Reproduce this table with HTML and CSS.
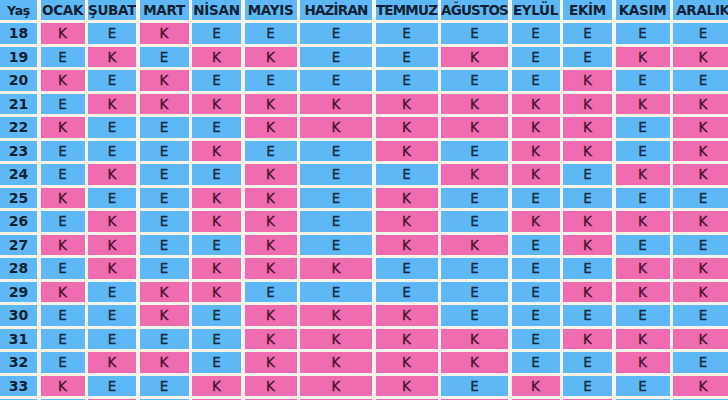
FILE: index.html
```html
<!DOCTYPE html>
<html lang="tr">
<head>
<meta charset="utf-8">
<title>Cinsiyet Tablosu</title>
<link rel="stylesheet" href="styles.css">
</head>
<body>
<div class="chart">
  <div class="h yas">Yaş</div><div class="h">OCAK</div><div class="h">ŞUBAT</div><div class="h">MART</div><div class="h">NİSAN</div><div class="h">MAYIS</div><div class="h nar">HAZİRAN</div><div class="h nar">TEMMUZ</div><div class="h nar">AĞUSTOS</div><div class="h">EYLÜL</div><div class="h">EKİM</div><div class="h">KASIM</div><div class="h">ARALIK</div>

  <div class="a">18</div><div class="k">K</div><div class="e">E</div><div class="k">K</div><div class="e">E</div><div class="e">E</div><div class="e">E</div><div class="e">E</div><div class="e">E</div><div class="e">E</div><div class="e">E</div><div class="e">E</div><div class="e">E</div>
  <div class="a">19</div><div class="e">E</div><div class="k">K</div><div class="e">E</div><div class="k">K</div><div class="k">K</div><div class="e">E</div><div class="e">E</div><div class="k">K</div><div class="e">E</div><div class="e">E</div><div class="k">K</div><div class="k">K</div>
  <div class="a">20</div><div class="k">K</div><div class="e">E</div><div class="k">K</div><div class="e">E</div><div class="e">E</div><div class="e">E</div><div class="e">E</div><div class="e">E</div><div class="e">E</div><div class="k">K</div><div class="e">E</div><div class="e">E</div>
  <div class="a">21</div><div class="e">E</div><div class="k">K</div><div class="k">K</div><div class="k">K</div><div class="k">K</div><div class="k">K</div><div class="k">K</div><div class="k">K</div><div class="k">K</div><div class="k">K</div><div class="k">K</div><div class="k">K</div>
  <div class="a">22</div><div class="k">K</div><div class="e">E</div><div class="e">E</div><div class="e">E</div><div class="k">K</div><div class="k">K</div><div class="k">K</div><div class="k">K</div><div class="k">K</div><div class="k">K</div><div class="e">E</div><div class="k">K</div>
  <div class="a">23</div><div class="e">E</div><div class="e">E</div><div class="e">E</div><div class="k">K</div><div class="e">E</div><div class="e">E</div><div class="k">K</div><div class="e">E</div><div class="k">K</div><div class="k">K</div><div class="e">E</div><div class="k">K</div>
  <div class="a">24</div><div class="e">E</div><div class="k">K</div><div class="e">E</div><div class="e">E</div><div class="k">K</div><div class="e">E</div><div class="e">E</div><div class="k">K</div><div class="k">K</div><div class="e">E</div><div class="k">K</div><div class="k">K</div>
  <div class="a">25</div><div class="k">K</div><div class="e">E</div><div class="e">E</div><div class="k">K</div><div class="k">K</div><div class="e">E</div><div class="k">K</div><div class="e">E</div><div class="e">E</div><div class="e">E</div><div class="e">E</div><div class="e">E</div>
  <div class="a">26</div><div class="e">E</div><div class="k">K</div><div class="e">E</div><div class="k">K</div><div class="k">K</div><div class="e">E</div><div class="k">K</div><div class="e">E</div><div class="k">K</div><div class="k">K</div><div class="k">K</div><div class="k">K</div>
  <div class="a">27</div><div class="k">K</div><div class="k">K</div><div class="e">E</div><div class="e">E</div><div class="k">K</div><div class="e">E</div><div class="k">K</div><div class="k">K</div><div class="e">E</div><div class="k">K</div><div class="e">E</div><div class="e">E</div>
  <div class="a">28</div><div class="e">E</div><div class="k">K</div><div class="e">E</div><div class="k">K</div><div class="k">K</div><div class="k">K</div><div class="e">E</div><div class="e">E</div><div class="e">E</div><div class="e">E</div><div class="k">K</div><div class="k">K</div>
  <div class="a">29</div><div class="k">K</div><div class="e">E</div><div class="k">K</div><div class="k">K</div><div class="e">E</div><div class="e">E</div><div class="e">E</div><div class="e">E</div><div class="e">E</div><div class="k">K</div><div class="k">K</div><div class="k">K</div>
  <div class="a">30</div><div class="e">E</div><div class="e">E</div><div class="k">K</div><div class="e">E</div><div class="k">K</div><div class="k">K</div><div class="k">K</div><div class="e">E</div><div class="e">E</div><div class="e">E</div><div class="e">E</div><div class="e">E</div>
  <div class="a">31</div><div class="e">E</div><div class="e">E</div><div class="e">E</div><div class="e">E</div><div class="k">K</div><div class="k">K</div><div class="k">K</div><div class="k">K</div><div class="e">E</div><div class="k">K</div><div class="k">K</div><div class="k">K</div>
  <div class="a">32</div><div class="e">E</div><div class="k">K</div><div class="k">K</div><div class="e">E</div><div class="k">K</div><div class="k">K</div><div class="k">K</div><div class="k">K</div><div class="e">E</div><div class="e">E</div><div class="k">K</div><div class="e">E</div>
  <div class="a">33</div><div class="k">K</div><div class="e">E</div><div class="e">E</div><div class="k">K</div><div class="k">K</div><div class="k">K</div><div class="k">K</div><div class="e">E</div><div class="k">K</div><div class="e">E</div><div class="e">E</div><div class="k">K</div>
  <div class="a">34</div><div class="e">E</div><div class="k">K</div><div class="e">E</div><div class="k">K</div><div class="k">K</div><div class="k">K</div><div class="k">K</div><div class="k">K</div><div class="k">K</div><div class="k">K</div><div class="e">E</div><div class="e">E</div>
</div>
</body>
</html>
```

FILE: styles.css
```css
html, body {
  margin: 0;
  padding: 0;
  background: #f7f2ea;
  overflow: hidden;
}

.chart {
  display: grid;
  grid-template-columns: 37px 44px 48px 49px 49px 52px 72px 62px 67px 48px 49px 54px 60px;
  grid-template-rows: 20px;
  grid-auto-rows: 20.5px;
  column-gap: 3.5px;
  row-gap: 3px;
  width: 760px;
  font-family: "DejaVu Sans", Verdana, sans-serif;
}

.chart > div {
  display: flex;
  align-items: center;
  justify-content: center;
  white-space: nowrap;
  overflow: hidden;
}

.h {
  background: #5fb8f6;
  color: #0e2133;
  font-weight: bold;
  font-size: 13.5px;
  letter-spacing: -0.3px;
}

.h.nar {
  letter-spacing: -0.8px;
}

.h.yas {
  font-size: 12.5px;
}

.a {
  background: #5fb8f6;
  color: #0e2133;
  font-weight: bold;
  font-size: 14px;
}

.e {
  background: #5fb8f6;
  color: #132b42;
  font-size: 13.5px;
  -webkit-text-stroke: 0.3px #132b42;
}

.k {
  background: #f06cb0;
  color: #4a0e2c;
  font-size: 13.5px;
  -webkit-text-stroke: 0.3px #4a0e2c;
}
```
